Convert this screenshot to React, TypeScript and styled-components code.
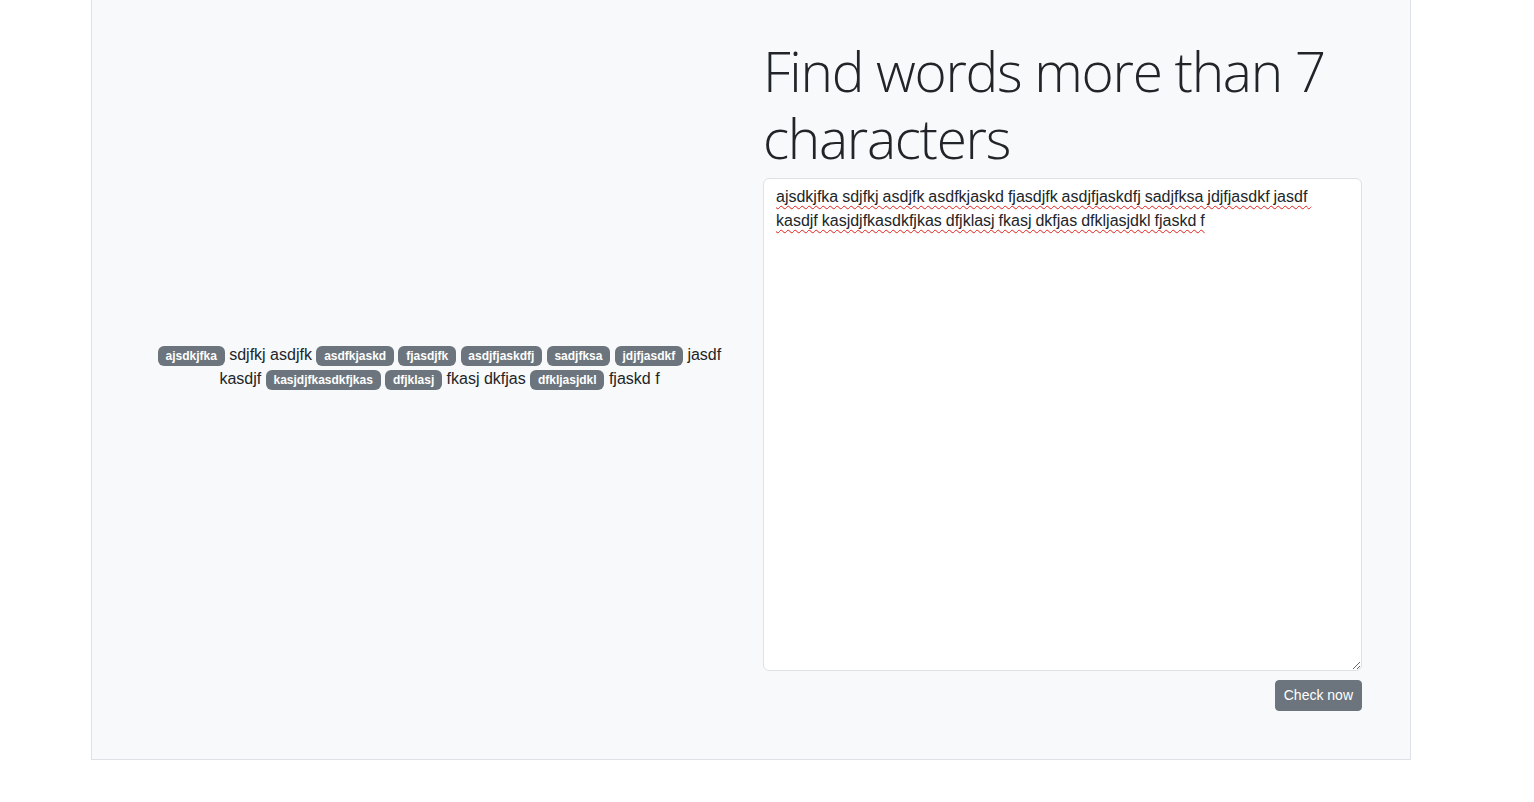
import React from "react";
import styled, { createGlobalStyle } from "styled-components";

const GlobalStyle = createGlobalStyle`
  html, body {
    margin: 0;
    padding: 0;
    background: #ffffff;
  }
  body {
    font-family: "Liberation Sans", Arial, sans-serif;
    font-size: 16px;
    line-height: 1.5;
    color: #212529;
  }
  *, *::before, *::after { box-sizing: border-box; }
`;

const Page = styled.div`
  width: 1502px;
  display: flex;
  justify-content: center;
`;

const Container = styled.div`
  width: 1320px;
  background: #f8f9fa;
  border: 1px solid #dee2e6;
  border-top: none;
  padding: 36px 48px 48px;
  display: grid;
  grid-template-columns: 599px 599px;
  column-gap: 24px;
`;

const PreviewColumn = styled.div`
  display: flex;
  align-items: center;
  justify-content: center;
  padding-bottom: 13px;
`;

const Preview = styled.p`
  margin: 0;
  text-align: center;
  line-height: 24px;
`;

const Badge = styled.span`
  display: inline-block;
  padding: 4.2px 7.8px;
  font-size: 12px;
  font-weight: 700;
  line-height: 1;
  color: #ffffff;
  background: #6c757d;
  border-radius: 6px;
  vertical-align: baseline;
  white-space: nowrap;
`;

const EditorColumn = styled.div`
  display: flex;
  flex-direction: column;
`;

const Title = styled.h1`
  margin: 0 0 8px;
  font-family: "Open Sans", "Noto Sans", sans-serif;
  font-weight: 300;
  font-size: 55px;
  line-height: 67px;
  color: #212529;
  letter-spacing: -1.3px;
  padding-top: 1px;
  margin-bottom: 7px;
`;

const TextArea = styled.textarea`
  display: block;
  width: 100%;
  height: 493px;
  padding: 6px 12px;
  font-family: "Liberation Sans", Arial, sans-serif;
  font-size: 16px;
  line-height: 24px;
  color: #212529;
  background: #ffffff;
  border: 1px solid #dee2e6;
  border-radius: 6px;
  outline: none;
  word-spacing: -0.5px;
  text-decoration: underline wavy #e0201c;
  text-decoration-thickness: 1px;
  text-underline-offset: 3px;
`;

const Actions = styled.div`
  display: flex;
  justify-content: flex-end;
  margin-top: 9px;
`;

const Button = styled.button`
  height: 31px;
  padding: 4px 8px;
  font-family: "Liberation Sans", Arial, sans-serif;
  font-size: 14px;
  line-height: 21px;
  color: #ffffff;
  background: #6c757d;
  border: 1px solid #6c757d;
  border-radius: 4px;
  cursor: pointer;
`;

const TEXT =
  "ajsdkjfka sdjfkj asdjfk asdfkjaskd fjasdjfk asdjfjaskdfj sadjfksa jdjfjasdkf jasdf kasdjf kasjdjfkasdkfjkas dfjklasj fkasj dkfjas dfkljasjdkl fjaskd f";

export default function App() {
  const words = TEXT.split(" ");
  return (
    <>
      <GlobalStyle />
      <Page>
        <Container>
          <PreviewColumn>
            <Preview>
              {words.map((w, i) => (
                <React.Fragment key={i}>
                  {i > 0 ? " " : ""}
                  {w.length > 7 ? <Badge>{w}</Badge> : w}
                </React.Fragment>
              ))}
            </Preview>
          </PreviewColumn>
          <EditorColumn>
            <Title>Find words more than 7 characters</Title>
            <TextArea defaultValue={TEXT} spellCheck={false} />
            <Actions>
              <Button type="button">Check now</Button>
            </Actions>
          </EditorColumn>
        </Container>
      </Page>
    </>
  );
}
